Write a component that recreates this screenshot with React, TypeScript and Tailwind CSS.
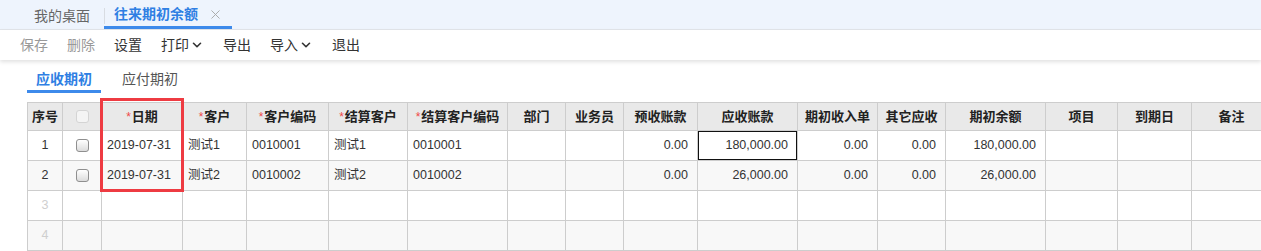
import { ChevronDown, X } from 'lucide-react';
import clsx from 'clsx';

interface Col {
  key: string;
  label: string;
  width: number;
  required?: boolean;
  align?: 'left' | 'right' | 'center';
}

const cols: Col[] = [
  { key: 'seq', label: '序号', width: 35, align: 'center' },
  { key: 'chk', label: '', width: 39, align: 'center' },
  { key: 'date', label: '日期', width: 81, required: true },
  { key: 'cust', label: '客户', width: 64, required: true },
  { key: 'custCode', label: '客户编码', width: 82, required: true },
  { key: 'settle', label: '结算客户', width: 79, required: true },
  { key: 'settleCode', label: '结算客户编码', width: 100, required: true },
  { key: 'dept', label: '部门', width: 58 },
  { key: 'staff', label: '业务员', width: 58 },
  { key: 'prepaid', label: '预收账款', width: 74, align: 'right' },
  { key: 'receivable', label: '应收账款', width: 100, align: 'right' },
  { key: 'income', label: '期初收入单', width: 80, align: 'right' },
  { key: 'other', label: '其它应收', width: 68, align: 'right' },
  { key: 'balance', label: '期初余额', width: 100, align: 'right' },
  { key: 'project', label: '项目', width: 72 },
  { key: 'due', label: '到期日', width: 74 },
  { key: 'note', label: '备注', width: 80 },
];

const rows: Record<string, string>[] = [
  {
    seq: '1', date: '2019-07-31', cust: '测试1', custCode: '0010001', settle: '测试1', settleCode: '0010001',
    prepaid: '0.00', receivable: '180,000.00', income: '0.00', other: '0.00', balance: '180,000.00',
  },
  {
    seq: '2', date: '2019-07-31', cust: '测试2', custCode: '0010002', settle: '测试2', settleCode: '0010002',
    prepaid: '0.00', receivable: '26,000.00', income: '0.00', other: '0.00', balance: '26,000.00',
  },
  { seq: '3' },
  { seq: '4' },
];

const tools = [
  { label: '保存', disabled: true },
  { label: '删除', disabled: true },
  { label: '设置' },
  { label: '打印', menu: true },
  { label: '导出' },
  { label: '导入', menu: true },
  { label: '退出' },
];

function Checkbox({ disabled }: { disabled?: boolean }) {
  return (
    <div
      className={clsx(
        'mx-auto w-[13px] h-[13px] rounded-[3px] border',
        disabled
          ? 'border-[#d4d4d4] bg-[#f4f4f4]'
          : 'border-[#8f8f8f] bg-gradient-to-b from-white to-[#dcdcdc]',
      )}
    />
  );
}

export default function App() {
  return (
    <div
      className="relative w-[1261px] h-[251px] overflow-hidden bg-white text-[#333]"
      style={{ fontFamily: '"Liberation Sans", "Noto Sans CJK SC", sans-serif' }}
    >
      {/* Top tabs */}
      <div className="h-[30px] bg-[#eef4fd] border-b border-[#e2e5ea] flex items-end text-[14px]">
        <div className="w-[104px] h-[29px] pt-[3px] flex items-center pl-[34px] text-[#666]">我的桌面</div>
        <div className="h-[29px] pt-[3px] flex items-center">
          <div className="w-px h-[16px] bg-[#d8dce2]" />
        </div>
        <div className="h-[29px] w-[128px] flex items-center pl-[10px] border-b-[3px] border-[#3d8aeb] pt-[3px] -ml-px">
          <span className="font-bold text-[#2f7fe3]">往来期初余额</span>
          <X size={15} strokeWidth={1.5} className="ml-[10px] text-[#a8a8a8]" />
        </div>
      </div>

      {/* Toolbar */}
      <div className="relative h-[30px] bg-white flex items-center pl-[20px] gap-[19px] text-[14px] shadow-[0_2px_4px_rgba(0,0,0,0.12)]">
        {tools.map(t => (
          <div key={t.label} className={clsx('flex items-center', t.disabled ? 'text-[#999]' : 'text-[#333]')}>
            <span>{t.label}</span>
            {t.menu && <ChevronDown size={14} strokeWidth={2.8} className="ml-[1px]" />}
          </div>
        ))}
      </div>

      {/* Sub tabs */}
      <div className="h-[33px] flex items-end pl-[27px] gap-[12px] text-[14px]">
        <div className="w-[74px] h-[28px] pt-[3px] flex items-center justify-center border-b-[3px] border-[#3d8aeb] font-bold text-[#2f7fe3]">
          应收期初
        </div>
        <div className="w-[74px] h-[28px] pt-[3px] flex items-center justify-center border-b-[3px] border-transparent text-[#555]">
          应付期初
        </div>
      </div>

      {/* Grid */}
      <div className="ml-[27px] mt-[9px]">
        <table className="w-[1244px] table-fixed border-collapse text-[12.5px]">
          <colgroup>
            {cols.map(c => (
              <col key={c.key} style={{ width: c.width }} />
            ))}
          </colgroup>
          <thead>
            <tr className="h-[28px] bg-[#e9e9e9]">
              {cols.map(c => (
                <th
                  key={c.key}
                  className="border border-[#cdcdcd] px-[4px] font-bold text-[13px] text-[#222] text-center whitespace-nowrap"
                >
                  {c.key === 'chk' ? (
                    <Checkbox disabled />
                  ) : (
                    <>
                      {c.required && <span className="text-[#f04848] font-normal text-[12px] mr-[1px]">*</span>}
                      {c.label}
                    </>
                  )}
                </th>
              ))}
            </tr>
          </thead>
          <tbody>
            {rows.map((r, i) => {
              const empty = !r.date;
              return (
                <tr key={r.seq} className={clsx('h-[30px]', i % 2 === 1 ? 'bg-[#f8f8f8]' : 'bg-white')}>
                  {cols.map(c => (
                    <td
                      key={c.key}
                      className={clsx(
                        'border border-[#cdcdcd] whitespace-nowrap overflow-hidden',
                        c.align === 'right' ? 'text-right pr-[9px]' : c.align === 'center' ? 'text-center' : 'text-left pl-[5px]',
                        c.key === 'seq' && empty && 'text-[#cfcfcf]',
                        c.key === 'receivable' && i === 0 && 'shadow-[inset_0_0_0_1px_#111] border-[#111]',
                      )}
                    >
                      {c.key === 'chk' ? (empty ? null : <Checkbox />) : r[c.key] ?? ''}
                    </td>
                  ))}
                </tr>
              );
            })}
          </tbody>
        </table>
      </div>

      {/* red annotation box around the date column */}
      <div className="absolute left-[100px] top-[98px] w-[84px] h-[94px] border-[3px] border-[#ee3b42] pointer-events-none" />
    </div>
  );
}
